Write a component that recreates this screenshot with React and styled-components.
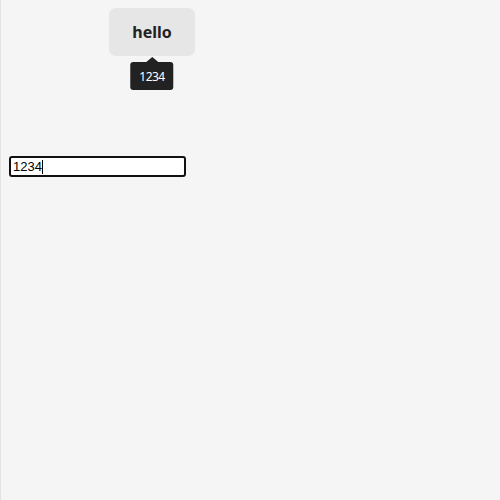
import React from "react";
import styled, { createGlobalStyle } from "styled-components";

const GlobalStyle = createGlobalStyle`
  html, body {
    margin: 0;
    height: 100%;
    background: #f5f5f5;
  }
  body {
    border-left: 1px solid #e2e2e2;
    box-sizing: border-box;
    font-family: "Noto Sans", sans-serif;
  }
`;

const Page = styled.div`
  display: flex;
  flex-direction: column;
  align-items: flex-start;
  padding: 8px 0 0 8px;
`;

const TipWrap = styled.div`
  position: relative;
  margin-left: 100px;
`;

const HelloButton = styled.button`
  width: 86px;
  height: 48px;
  border: none;
  border-radius: 7px;
  background: #e6e6e6;
  color: #222;
  font-family: "Noto Sans", sans-serif;
  font-weight: 700;
  font-size: 16px;
  padding: 0;
`;

const Tooltip = styled.div`
  position: absolute;
  top: 54px;
  left: 50%;
  transform: translateX(-50%);
  background: #222;
  color: #fff;
  border-radius: 3px;
  padding: 0 9px;
  height: 28px;
  display: flex;
  align-items: center;
  font-family: "Noto Sans", sans-serif;
  font-size: 12px;
  letter-spacing: -0.5px;
  white-space: nowrap;

  &::before {
    content: "";
    position: absolute;
    top: -5px;
    left: 50%;
    transform: translateX(-50%);
    border-left: 6px solid transparent;
    border-right: 6px solid transparent;
    border-bottom: 5px solid #222;
  }
`;

const FieldWrap = styled.div`
  position: relative;
  margin-top: 100px;
`;

const Field = styled.input`
  display: block;
  width: 177px;
  height: 21px;
  box-sizing: border-box;
  border: 2px solid #111;
  border-radius: 3px;
  background: #fff;
  padding: 0 2px;
  font-family: "Liberation Sans", Arial, sans-serif;
  font-size: 13px;
  color: #000;
  outline: none;
  caret-color: transparent;
`;

const Caret = styled.span`
  position: absolute;
  left: 33px;
  top: 4px;
  width: 1px;
  height: 14px;
  background: #000;
`;

const App = () => {
  return (
    <>
      <GlobalStyle />
      <Page>
        <TipWrap>
          <HelloButton>hello</HelloButton>
          <Tooltip>1234</Tooltip>
        </TipWrap>
        <FieldWrap>
          <Field defaultValue="1234" />
          <Caret />
        </FieldWrap>
      </Page>
    </>
  );
};

export default App;
